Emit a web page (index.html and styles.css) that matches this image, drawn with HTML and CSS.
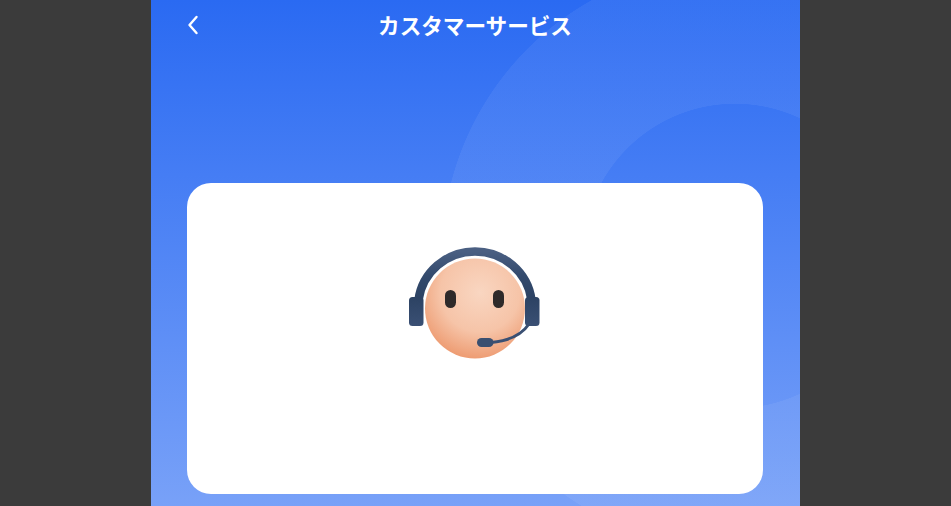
FILE: index.html
```html
<!DOCTYPE html>
<html lang="ja">
<head>
    <meta charset="UTF-8">
    <meta name="viewport" content="width=device-width, initial-scale=1.0">
    <title>カスタマーサービス</title>
    <link rel="stylesheet" href="styles.css">
</head>
<body>

<div class="phone">
    <div class="header">
        <button class="backBtn" aria-label="back">
            <svg width="16" height="20" viewBox="0 0 16 20">
                <path d="M12.5 2 L5.5 10 L12.5 18" fill="none" stroke="#fff" stroke-width="2.4" stroke-linecap="round" stroke-linejoin="round"/>
            </svg>
        </button>
        <h1>カスタマーサービス</h1>
    </div>

    <div class="card">
        <svg class="agent" width="140" height="120" viewBox="0 0 140 120">
            <defs>
                <radialGradient id="faceFill" cx="0.55" cy="0.34" r="0.72">
                    <stop offset="0" stop-color="#f9d6c1"/>
                    <stop offset="0.55" stop-color="#f6c4a8"/>
                    <stop offset="1" stop-color="#ec9468"/>
                </radialGradient>
                <linearGradient id="cupFill" x1="0" y1="0" x2="0" y2="1">
                    <stop offset="0" stop-color="#2c4263"/>
                    <stop offset="1" stop-color="#3a5074"/>
                </linearGradient>
                <linearGradient id="bandFill" x1="0" y1="0" x2="0" y2="1">
                    <stop offset="0" stop-color="#4a5f82"/>
                    <stop offset="0.5" stop-color="#334a6d"/>
                    <stop offset="1" stop-color="#2c4263"/>
                </linearGradient>
            </defs>
            <circle cx="70" cy="65.5" r="50" fill="url(#faceFill)"/>
            <path d="M13.5 57 A57 56 0 0 1 126.5 57" fill="none" stroke="url(#bandFill)" stroke-width="8.5"/>
            <rect x="4" y="54" width="14.5" height="29" rx="3.5" fill="url(#cupFill)"/>
            <rect x="120" y="54" width="14.5" height="29" rx="3.5" fill="url(#cupFill)"/>
            <rect x="40" y="47" width="11" height="18" rx="5.5" fill="#2e2a2a"/>
            <rect x="88" y="47" width="11" height="18" rx="5.5" fill="#2e2a2a"/>
            <path d="M86 99.5 C102 98 116 93 124 81" fill="none" stroke="#3a5073" stroke-width="3" stroke-linecap="round"/>
            <rect x="72" y="95" width="16.5" height="9" rx="4.5" fill="#3a4f70"/>
        </svg>
    </div>
</div>

</body>
</html>
```

FILE: styles.css
```css
html, body {
    height: 100%;
}

body {
    margin: 0;
    background-color: #3b3b3b;
    font-family: "Noto Sans CJK JP", "Noto Sans", sans-serif;
    overflow: hidden;
}

.phone {
    width: 649px;
    height: 100%;
    margin: 0 auto;
    box-sizing: border-box;
    padding: 0 37px 0 36px;
    background:
        radial-gradient(circle at 584px 256px, transparent 152px, rgba(255, 255, 255, 0.06) 152.5px, rgba(255, 255, 255, 0.06) 293px, transparent 293.5px),
        linear-gradient(180deg, #2a6af2 0%, #78a1f8 100%);
}

.header {
    display: flex;
    align-items: center;
    justify-content: center;
    height: 48px;
    position: relative;
    margin-bottom: 135px;
}

.header h1 {
    margin: 0;
    color: #fff;
    font-size: 21.6px;
    font-weight: 700;
}

.backBtn {
    position: absolute;
    left: -3px;
    top: 15px;
    padding: 0;
    border: 0;
    background: none;
    line-height: 0;
}

.card {
    height: 311px;
    box-sizing: border-box;
    padding-top: 60px;
    display: flex;
    justify-content: center;
    align-items: flex-start;
    background-color: #fff;
    border-radius: 24px;
}

.agent {
    filter: blur(0.4px);
}
```
